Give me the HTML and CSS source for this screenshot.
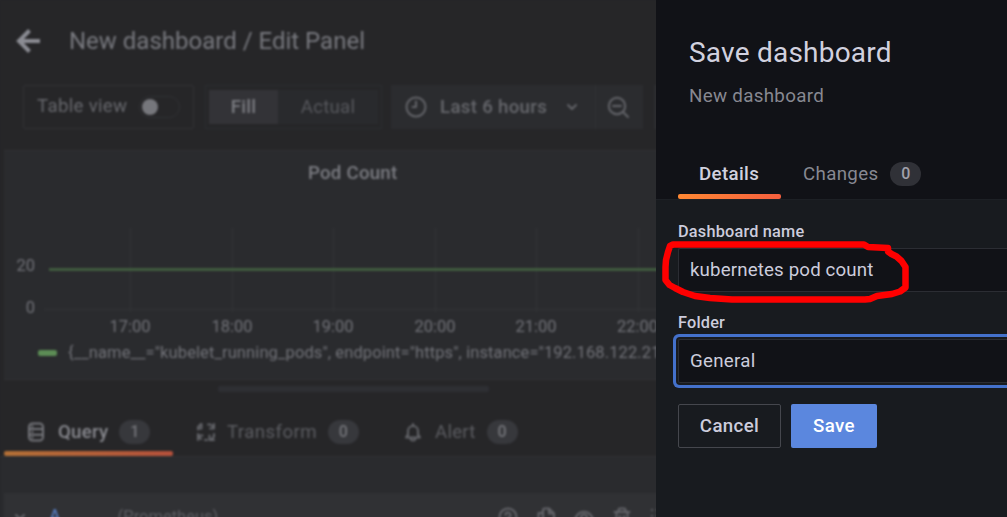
FILE: index.html
```html
<!DOCTYPE html>
<html lang="en">
<head>
<meta charset="utf-8">
<title>Save dashboard</title>
<link rel="stylesheet" href="styles.css">
</head>
<body>
<div class="app">
  <main class="backdrop">
    <div class="editor">
      <header class="page-header">
        <svg class="back" viewBox="0 0 26 26" width="26" height="26"><path d="M25 13H4M14.500 2.500L4 13l10.500 10.500"/></svg>
        <h1 class="page-title">New dashboard / Edit Panel</h1>
      </header>

      <div class="toolbar">
        <div class="table-view"><span>Table view</span><span class="switch"><i class="knob"></i></span></div>
        <div class="segmented"><span class="segment active">Fill</span><span class="segment">Actual</span></div>
        <div class="time-picker">
          <div class="range">
            <svg class="icon" viewBox="0 0 22 22" width="22" height="22"><circle cx="11" cy="11" r="9.500"/><path d="M11 5.500V11H7.500"/></svg>
            <span>Last 6 hours</span>
            <svg class="icon chevron" viewBox="0 0 12 8" width="12" height="8"><path d="M2 2l4 4 4-4"/></svg>
          </div>
          <div class="zoom-out">
            <svg class="icon" viewBox="0 0 22 22" width="22" height="22"><circle cx="10" cy="10" r="8.200"/><path d="M6 10h8M16 16l5 5"/></svg>
          </div>
        </div>
        <div class="next-control"></div>
      </div>

      <section class="panel">
        <h2 class="panel-title">Pod Count</h2>
        <svg class="chart" viewBox="0 0 696 112" width="696" height="112">
          <path class="grid" d="M126.500 0v84M228.500 0v84M329.500 0v84M431.500 0v84M532.500 0v84M634.500 0v84M40 81.500H696"/>
          <path class="series" d="M45 41.500H696"/>
          <g class="tick end"><text x="31" y="42.500">20</text><text x="31" y="84.500">0</text></g>
          <g class="tick middle"><text x="126" y="104">17:00</text><text x="228" y="104">18:00</text><text x="329" y="104">19:00</text><text x="431" y="104">20:00</text><text x="532" y="104">21:00</text><text x="633.500" y="104">22:00</text></g>
        </svg>
        <div class="legend"><i class="swatch"></i><span>{__name__="kubelet_running_pods", endpoint="https", instance="192.168.122.21"}</span></div>
      </section>

      <div class="resize"><i class="handle"></i></div>

      <nav class="tabs">
        <div class="tab query active">
          <svg class="icon" viewBox="0 0 18 20" width="18" height="20"><rect x="2" y="1.500" width="14" height="17" rx="3.500"/><path d="M2 7h14M2 12.800h14M5 10h.5M5 15.500h.5M5 4.500h.5"/></svg>
          <span class="label">Query</span><span class="badge">1</span>
        </div>
        <div class="tab transform">
          <svg class="icon" viewBox="0 0 20 20" width="20" height="20"><path d="M2 7.500V5l3-3M5.500 2v4.500H2M12 2.500h2.500L18 5.500M18 2v4.500h-4M2 12v2l3 3M2 18v-4.500h4.500M18 12v2.500L15 18M18 18h-4.500v-4.500M9 18h2"/></svg>
          <span class="label">Transform</span><span class="badge">0</span>
        </div>
        <div class="tab alert">
          <svg class="icon" viewBox="0 0 18 20" width="18" height="20"><path d="M9 2v1.500M4 13.500V9a5 5 0 0 1 10 0v4.500M3.500 13L2 15.500h14L14.500 13M6.500 16a2.500 2.500 0 0 0 5 0"/></svg>
          <span class="label">Alert</span><span class="badge">0</span>
        </div>
      </nav>

      <section class="queries">
        <div class="query-row">
          <svg class="icon caret" viewBox="0 0 12 8" width="12" height="8"><path d="M2 2l4 4 4-4"/></svg>
          <span class="ref">A</span>
          <span class="source">(Prometheus)</span>
          <div class="actions">
            <svg class="icon" viewBox="0 0 20 20" width="20" height="20"><circle cx="10" cy="10" r="8.500"/><path d="M7.500 8a2.500 2.500 0 1 1 3.500 2.300c-1 .5-1 1-1 1.700M10 14v1"/></svg>
            <svg class="icon" viewBox="0 0 20 20" width="20" height="20"><path d="M7 14V3a1.500 1.500 0 0 1 1.500-1.500H13l5 5V14zM13 1.500v5h5M7 6H2.500v12.500H14V15"/></svg>
            <svg class="icon" viewBox="0 0 20 20" width="20" height="20"><path d="M1.500 11C5 2.500 15 2.500 18.500 11 15 19 5 19 1.500 11z"/><circle cx="10" cy="10.500" r="3"/></svg>
            <svg class="icon" viewBox="0 0 20 20" width="20" height="20"><path d="M2.500 5h15M6.500 5V3a1.500 1.500 0 0 1 1.500-1.500h4A1.500 1.500 0 0 1 13.500 3v2M4.500 5v12a1.500 1.500 0 0 0 1.500 1.500h8a1.500 1.500 0 0 0 1.500-1.500V5M8 9v6M12 9v6"/></svg>
            <svg class="icon dots" viewBox="0 0 10 20" width="10" height="20"><path d="M2 3h.1M7 3h.1M2 9h.1M7 9h.1M2 15h.1M7 15h.1"/></svg>
          </div>
        </div>
      </section>
    </div>
  </main>

  <aside class="drawer">
    <header class="drawer-header">
      <h2 class="drawer-title">Save dashboard</h2>
      <p class="drawer-subtitle">New dashboard</p>
      <nav class="drawer-tabs">
        <div class="drawer-tab selected">Details</div>
        <div class="drawer-tab">Changes<span class="count">0</span></div>
      </nav>
    </header>
    <form class="form">
      <div class="field">
        <span class="field-label">Dashboard name</span>
        <div class="input name-input">kubernetes pod count
          <svg class="marker" viewBox="0 0 250 62" width="250" height="62"><path d="M11 1.500L8 3 6 9 4 17l-.5 7v13l4 5L13 45l8 4 12 4 15 2 22 1.500H203l5-.5 7-3 15-2 8-2.500 5.500-4V24l-4-6-5-4.500-5-2.500-3.500-2.500V5L206 4l-4-2.500z"/></svg>
        </div>
      </div>
      <div class="field folder">
        <span class="field-label">Folder</span>
        <div class="input focused">General</div>
      </div>
      <div class="buttons"><div class="button cancel">Cancel</div><div class="button save">Save</div></div>
    </form>
  </aside>
</div>
</body>
</html>
```
FILE: styles.css
```css
* { box-sizing: border-box; }
body { margin: 0; background: #262628; font-family: Roboto, "Liberation Sans", sans-serif; font-size: 18.7px; letter-spacing: 0.22px; }
h1, h2, p { margin: 0; font-weight: 400; }
.app { display: grid; grid-template-columns: 656px 351px; height: 517px; overflow: hidden; }
svg { flex: none; }
.icon { fill: none; stroke: #626368; stroke-width: 2; stroke-linecap: round; stroke-linejoin: round; }

/* Editor behind the drawer */
.backdrop { overflow: hidden; background: #262628; }
.editor { width: 700px; height: 540px; display: flex; flex-direction: column; filter: blur(1.1px); color: #66676c; background: #262628; }
.page-header { height: 85px; flex: none; display: flex; align-items: center; gap: 28px; padding: 0 0 4px 15px; }
.back { fill: none; stroke: #8b8c93; stroke-width: 4; }
.page-title { font-size: 24px; letter-spacing: 0; color: #77787e; }
.toolbar { height: 44px; flex: none; display: flex; padding-left: 23px; font-weight: 500; }
.table-view { width: 171px; border: 1px solid #313235; border-radius: 2px; display: flex; align-items: center; gap: 12px; padding: 0 0 2px 13px; font-weight: 400; letter-spacing: 0.3px; }
.switch { width: 41px; height: 22px; border: 1px solid #303134; border-radius: 11px; padding: 2px; margin-top: 2px; }
.knob { display: block; width: 16px; height: 16px; border-radius: 50%; background: #76777c; }
.segmented { width: 177px; margin-left: 11px; display: flex; border: 1px solid #2c2d30; padding: 4px 3px; }
.segment { flex: 1; display: flex; align-items: center; justify-content: center; background: #292a2d; font-weight: 400; color: #56575c; }
.segment.active { flex: 0 0 69px; background: #333337; color: #7b7c82; font-weight: 500; }
.time-picker { width: 252px; margin-left: 9px; display: flex; background: #2b2c2f; }
.range { width: 205px; display: flex; align-items: center; gap: 13px; padding: 0 0 1px 14px; border-right: 1px solid #303135; letter-spacing: 0.3px; }
.chevron { margin-left: 6px; }
.zoom-out { flex: 1; display: flex; align-items: center; justify-content: center; padding-right: 4px; }
.next-control { width: 40px; margin-left: 11px; background: #2b2c2f; }

.panel { height: 230px; flex: none; margin: 21px 0 0 4px; background: #2a2b2e; border: 1px solid #303134; border-right: 0; border-left: 0; display: flex; flex-direction: column; }
.panel-title { height: 43px; line-height: 44px; padding-left: 304px; font-size: 18.700px; font-weight: 500; color: #7b7c82; }
.chart { margin-top: 34px; }
.grid { stroke: #313235; stroke-width: 1.500; fill: none; }
.series { stroke: #456542; stroke-width: 2.500; }
.tick { font-size: 16.500px; fill: #717278; letter-spacing: 0; }
.end { text-anchor: end; }
.middle { text-anchor: middle; }
.legend { display: flex; align-items: center; gap: 11px; padding: 1px 0 0 34px; height: 24px; white-space: nowrap; font-size: 16.500px; letter-spacing: 0.1px; color: #717278; }
.swatch { width: 19px; height: 6px; border-radius: 2px; background: #5c8c55; flex: none; }
.resize { height: 11px; flex: none; padding: 6px 0 0 218px; }
.handle { display: block; width: 271px; height: 6px; border-radius: 2px; background: #2e2f33; }

.tabs { height: 66px; flex: none; display: flex; padding-left: 4px; border-bottom: 1px solid #303134; }
.tab { display: flex; align-items: center; padding: 16px 0 0; color: #5b5c61; position: relative; height: 65px; }
.query { width: 169px; padding-left: 23px; }
.transform { width: 210px; padding-left: 23px; letter-spacing: 0.4px; }
.alert { padding-left: 21px; }
.tab .label { margin-left: 11px; }
.alert .label { margin-left: 13px; }
.query .label { color: #88898f; font-weight: 500; margin-left: 13px; }
.query .icon { stroke: #74757a; }
.query.active::after { content: ""; position: absolute; left: 0; right: 0; bottom: 0; height: 5px; border-radius: 2px; background: linear-gradient(90deg, #b37036, #b5503b); }
.badge { width: 31px; height: 24px; border-radius: 12px; background: #37383c; display: flex; align-items: center; justify-content: center; font-size: 16px; font-weight: 500; margin-left: 11px; color: #74757a; }
.queries { flex: 1; background: #2a2b2e; padding: 36px 0 0 4px; }
.query-row { height: 47px; background: #303134; display: flex; align-items: center; padding: 0 0 0 10px; font-size: 17.500px; letter-spacing: 0; }
.ref { margin: 0 0 2px 23px; font-weight: 500; color: #5478b8; }
.source { margin-left: 57px; width: 105px; font-size: 16.500px; color: #5b5c61; }
.actions { display: flex; gap: 18px; margin-left: 275px; }

/* Save drawer */
.drawer { background: #181b1f; color: #ccccdc; min-width: 0; position: relative; }
.drawer-header { height: 200px; background: #111217; border-bottom: 1px solid #1d2025; padding: 34px 0 0 22px; display: flex; flex-direction: column; }
.drawer-title { padding-left: 11px; font-size: 28px; line-height: 38px; letter-spacing: 0.220px; color: #d1d1df; }
.drawer-subtitle { padding-left: 11px; margin-top: 11px; font-size: 18.800px; line-height: 26px; letter-spacing: 0.3px; color: #878891; }
.drawer-tabs { display: flex; margin-top: 40px; height: 50px; }
.drawer-tab { display: flex; align-items: center; height: 50px; padding: 0 0 1px 22px; color: #878891; letter-spacing: 0.35px; }
.drawer-tab.selected { width: 103px; padding-left: 21px; color: #d1d1df; font-weight: 500; position: relative; }
.selected::after { content: ""; position: absolute; left: 0; right: 0; bottom: 0; height: 5px; border-radius: 2px; background: linear-gradient(90deg, #ff8833, #f55f3e); }
.count { width: 31px; height: 24px; margin-left: 12px; border-radius: 12px; background: #303137; color: #a0a0aa; display: flex; align-items: center; justify-content: center; font-size: 16px; font-weight: 500; }
.form { padding: 21px 0 0 22px; }
.field-label { display: block; height: 27px; line-height: 21px; font-size: 16.300px; letter-spacing: 0.200px; font-weight: 500; }
.folder { margin-top: 20px; }
.input { height: 44px; line-height: 42px; border: 1px solid #2b2d33; border-right: 0; border-radius: 2px 0 0 2px; background: #111217; padding-left: 11px; }
.name-input { position: relative; letter-spacing: 0.150px; }
.marker { position: absolute; left: -17px; top: -6px; fill: none; stroke: #f00; stroke-width: 6.500; stroke-linejoin: round; overflow: visible; }
.focused { box-shadow: 0 0 0 2px #181b1f, 0 0 0 5px #4471cb; letter-spacing: 0.3px; }
.buttons { display: flex; gap: 10px; margin-top: 21px; font-weight: 500; letter-spacing: 0.350px; }
.button { height: 44px; border-radius: 2px; display: flex; align-items: center; justify-content: center; }
.cancel { width: 103px; border: 1px solid #45474d; }
.save { width: 86px; background: #5b87de; color: #fff; }
```
